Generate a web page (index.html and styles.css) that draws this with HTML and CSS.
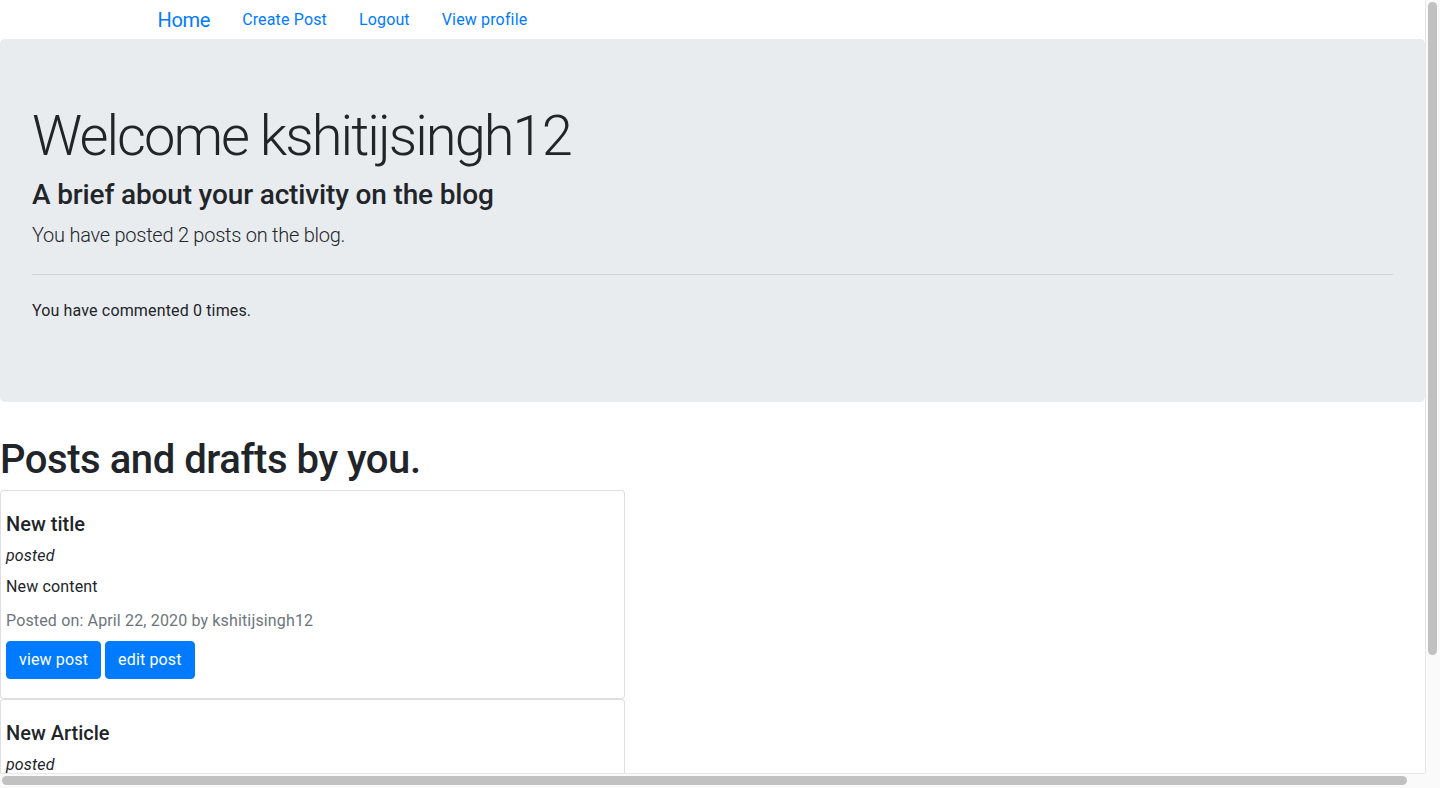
FILE: index.html
```html
<!DOCTYPE html>
<html lang="en">
<head>
<meta charset="utf-8">
<title>Dashboard</title>
<link rel="stylesheet" href="styles.css">
</head>
<body>
<div class="page">
  <nav class="navbar">
    <div class="container">
      <a class="brand" href="#">Home</a>
      <a class="nav-link" href="#">Create Post</a>
      <a class="nav-link" href="#">Logout</a>
      <a class="nav-link" href="#">View profile</a>
    </div>
  </nav>

  <section class="jumbotron">
    <h1 class="display">Welcome kshitijsingh12</h1>
    <h3 class="subhead">A brief about your activity on the blog</h3>
    <p class="lead">You have posted 2 posts on the blog.</p>
    <hr class="divider">
    <p class="plain">You have commented 0 times.</p>
  </section>

  <div class="posts">
    <h1 class="posts-title">Posts and drafts by you.</h1>
    <div class="card">
      <div class="card-body">
        <h5 class="card-title">New title</h5>
        <p class="status"><em>posted</em></p>
        <p class="card-text">New content</p>
        <p class="meta">Posted on: April 22, 2020 by kshitijsingh12</p>
        <div class="actions">
          <a class="btn" href="#">view post</a>
          <a class="btn" href="#">edit post</a>
        </div>
      </div>
    </div>
    <div class="card">
      <div class="card-body">
        <h5 class="card-title">New Article</h5>
        <p class="status"><em>posted</em></p>
        <p class="card-text">Another content</p>
        <p class="meta">Posted on: April 22, 2020 by kshitijsingh12</p>
        <div class="actions">
          <a class="btn" href="#">view post</a>
          <a class="btn" href="#">edit post</a>
        </div>
      </div>
    </div>
  </div>
</div>

<div class="vscroll"><div class="vthumb"></div></div>
<div class="hscroll"><div class="hthumb"></div></div>
<div class="corner"></div>
</body>
</html>
```

FILE: styles.css
```css
html, body {
  margin: 0;
  padding: 0;
  overflow: hidden;
  background: #fff;
}
body {
  font-family: Roboto, "Noto Sans", "Liberation Sans", sans-serif;
  font-size: 16px;
  line-height: 1.5;
  letter-spacing: 0.15px;
  color: #212529;
}
*, *::before, *::after { box-sizing: border-box; }
.page {
  width: 1425px;
}
a { text-decoration: none; color: #007bff; }

.navbar .container {
  max-width: 1140px;
  margin: 0 auto;
  padding: 1px 15px 0;
  display: flex;
  align-items: center;
  height: 39px;
}
.brand {
  font-size: 20px;
  line-height: 30px;
  letter-spacing: -0.3px;
  margin-right: 16px;
}
.nav-link {
  padding: 0 16px;
  line-height: 24px;
}

.jumbotron {
  background: #e9ecef;
  border-radius: 4.8px;
  padding: 64px 32px;
  margin-bottom: 34px;
}
.display {
  font-size: 56px;
  font-weight: 300;
  line-height: 1.2;
  letter-spacing: -1.95px;
  margin: 0 0 8px;
}
.subhead {
  font-size: 28px;
  font-weight: 500;
  line-height: 1.2;
  letter-spacing: -0.15px;
  margin: 0 0 8px;
}
.lead {
  font-size: 20px;
  font-weight: 300;
  letter-spacing: -0.25px;
  margin: 0;
}
.divider {
  border: 0;
  border-top: 1px solid rgba(0,0,0,.1);
  margin: 24px 0;
  height: 0;
}
.plain {
  margin: 0 0 15px;
}

.posts {
  margin-right: -16px;
  padding-right: 16px;
}
.posts-title {
  font-size: 40px;
  font-weight: 500;
  line-height: 1.2;
  letter-spacing: -0.45px;
  margin: 0 0 6px;
}
.card {
  width: 625px;
  border: 1px solid rgba(0,0,0,.125);
  border-radius: 4px;
  background: #fff;
}
.card-body {
  padding: 21px 5px 19px;
}
.card-title {
  font-size: 20px;
  font-weight: 500;
  line-height: 1.2;
  letter-spacing: 0;
  margin: 0 0 8px;
}
.status { margin: 0 0 7px; }
.card-text { margin: 0 0 10px; }
.meta { margin: 0 0 8px; color: #6c757d; }
.actions {
  display: flex;
  gap: 4px;
}
.btn {
  display: inline-block;
  color: #fff;
  background: #007bff;
  border: 1px solid #007bff;
  border-radius: 4px;
  padding: 6px 12px;
  line-height: 24px;
}

.vscroll {
  position: fixed;
  top: 0;
  right: 0;
  width: 15px;
  height: 773px;
  background: #fafafa;
  border-left: 1px solid #e8e8e8;
}
.vthumb {
  margin: 2px 0 0 2px;
  width: 9px;
  height: 653px;
  border-radius: 5px;
  background: #c1c1c1;
}
.hscroll {
  position: fixed;
  left: 0;
  bottom: 0;
  width: 1425px;
  height: 15px;
  background: #fafafa;
  border-top: 1px solid #e8e8e8;
}
.hthumb {
  margin: 2px 0 0 2px;
  width: 1405px;
  height: 9px;
  border-radius: 5px;
  background: #c1c1c1;
}
.corner {
  position: fixed;
  right: 0;
  bottom: 0;
  width: 15px;
  height: 15px;
  background: #fafafa;
}
```
